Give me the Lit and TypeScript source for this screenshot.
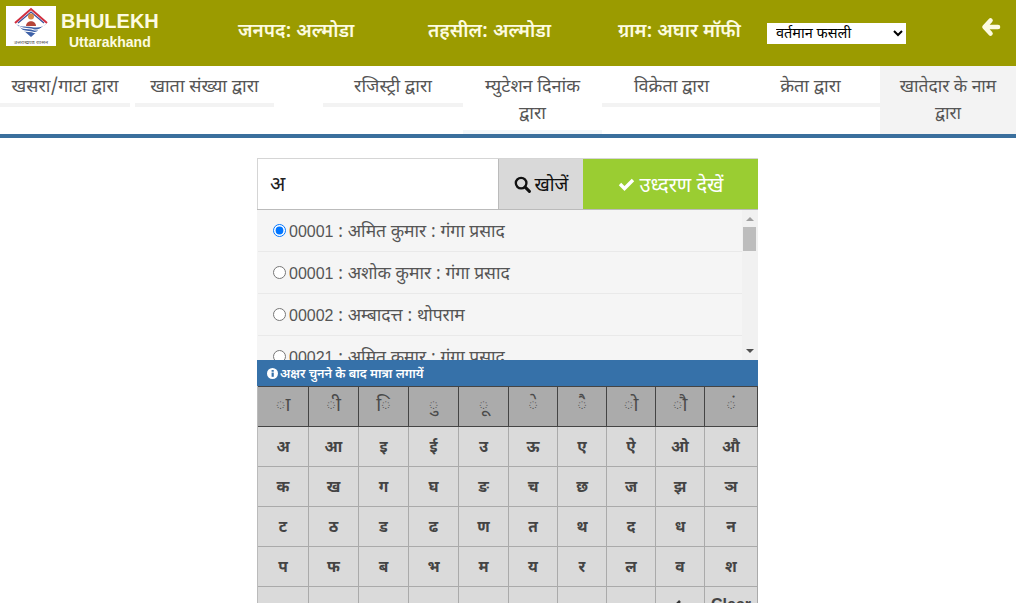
import { LitElement, html, css, svg } from "lit";
import { customElement } from "lit/decorators.js";

const TABS: [string, number][] = [
  ["खसरा/गाटा द्वारा", 130], ["", 5], ["खाता संख्या द्वारा", 139], ["", 49], ["रजिस्ट्री द्वारा", 140],
  ["म्युटेशन दिनांक द्वारा", 139], ["विक्रेता द्वारा", 139], ["क्रेता द्वारा", 139], ["खातेदार के नाम द्वारा", 136],
];
const ROWS = [["00001", " : अमित कुमार : गंगा प्रसाद"], ["00001", " : अशोक कुमार : गंगा प्रसाद"], ["00002", " : अम्बादत्त : थोपराम"], ["00021", " : अमित कुमार : गंगा प्रसाद"]];
const MATRA = ["ा", "ी", "ि", "ु", "ू", "े", "ै", "ो", "ौ", "ं"];
const KEYS = [
  ["अ", "आ", "इ", "ई", "उ", "ऊ", "ए", "ऐ", "ओ", "औ"],
  ["क", "ख", "ग", "घ", "ङ", "च", "छ", "ज", "झ", "ञ"],
  ["ट", "ठ", "ड", "ढ", "ण", "त", "थ", "द", "ध", "न"],
  ["प", "फ", "ब", "भ", "म", "य", "र", "ल", "व", "श"],
];

@customElement("app-root")
export class AppRoot extends LitElement {
  static styles = css`
    :host { display: block; height: 603px; overflow: hidden; background: #fff; color: #333;
      font-family: "Noto Sans Devanagari", "Lohit Devanagari", "Liberation Sans", "Noto Sans", sans-serif; }
    .hdr { height: 66px; background: #9b9b00; display: flex; color: #fdfbe0; box-sizing: border-box; padding-left: 6px; }
    .logo { width: 50px; height: 40px; margin-top: 6px; background: #fff; flex: none; }
    .logotxt { font-size: 5px; fill: #555; }
    .brand { width: 177px; margin-left: 5px; font-family: "Liberation Sans", sans-serif; font-weight: bold; padding-top: 10px; flex: none; }
    .b1 { font-size: 20px; line-height: 22px; }
    .b2 { font-size: 14px; line-height: 16px; padding: 2px 0 0 8px; }
    .info { width: 190px; flex: none; font-size: 18.9px; font-weight: 600; line-height: 22px; padding-top: 22px; box-sizing: border-box; white-space: nowrap; }
    .sel { width: 139px; height: 21px; margin: 23px 0 0 -41px; flex: none; background: #fff; border: 0; font-size: 14.5px; color: #000; padding: 1px 0 0 5px; font-family: inherit; }
    .back { margin: 17px 0 0 75px; flex: none; }
    .tabs { display: flex; height: 68px; border-bottom: 4px solid #3a6f9d; }
    .tab { flex: none; box-sizing: border-box; height: 41px; border-bottom: 4px solid #f3f3f3; text-align: center; font-size: 18px; line-height: 27px; padding-top: 8px; color: #555; white-space: nowrap; }
    .tab.two { height: 68px; white-space: normal; padding: 8px 20px 0; border-bottom-color: #f3f7fa; }
    .tab.on { height: 68px; white-space: normal; padding: 8px 15px 0; background: #f3f3f3; border: 0; font-size: 17.4px; }
    .tab.blank { border: 0; }
    .panel { width: 501px; margin: 20px 0 0 257px; }
    .search { display: flex; height: 52px; box-sizing: border-box; border-top: 1px solid #d5d5d5; border-bottom: 1px solid #bbb; }
    .inp { width: 242px; box-sizing: border-box; border-left: 1px solid #d5d5d5; border-right: 1px solid #bbb; padding: 3px 0 0 12px; font-size: 20px; line-height: 48px; color: #222; }
    .find { width: 84px; background: #d9d9d9; display: flex; align-items: center; justify-content: center; gap: 4px; font-size: 18.6px; color: #111; }
    .find span, .view span { padding-top: 5px; }
    .view { flex: 1; background: #9acd32; color: #fff; display: flex; align-items: center; justify-content: center; gap: 5px; font-size: 20px; }
    .listwrap { display: flex; height: 150px; overflow: hidden; background: #f5f5f5; padding-left: 1px; }
    .list { flex: 1; overflow: hidden; }
    .row { height: 41px; border-bottom: 1px solid #e9e9e9; display: flex; align-items: center; padding-left: 15px; font-size: 17.5px; color: #555; white-space: pre; }
    .row input { margin: 0 3px 0 0; width: 13px; height: 13px; }
    .row .t { padding-top: 4px; }
    .row .n { font-family: "Liberation Sans", sans-serif; font-size: 16px; }
    .sb { width: 16px; flex: none; display: flex; flex-direction: column; align-items: center; background: #f1f1f1; }
    .up, .dn { width: 0; height: 0; border-left: 4px solid transparent; border-right: 4px solid transparent; }
    .up { border-bottom: 4px solid #a0a0a0; margin: 7px 0 6px; }
    .dn { border-top: 4px solid #505050; margin-top: auto; margin-bottom: 7px; }
    .thumb { width: 13px; height: 24px; margin-right: 1px; background: #bdbdbd; }
    .note { height: 26px; background: #3671a9; color: #fff; display: flex; align-items: center; gap: 2px; padding-left: 10px; font-size: 12.6px; font-weight: 600; }
    .note span { padding-top: 3px; }
    .kb { border-left: 1px solid #bbb; }
    .krow { display: grid; grid-template-columns: 51px repeat(4, 50px) repeat(4, 49px) 1fr; height: 40px; }
    .k { background: #dadada; border: solid #aaa; border-width: 0 1px 1px 0; display: flex; align-items: center; justify-content: center; padding-top: 3px; font-size: 15.5px; font-weight: 700; color: #444; box-sizing: border-box; }
    .k.latin { font-family: "Liberation Sans", sans-serif; font-size: 16px; align-items: flex-start; padding-top: 9px; }
    .k.arrow { align-items: flex-start; padding-top: 12px; }
    .krow.m { height: 41px; }
    .m .k { background: #ababab; border-color: #444; border-width: 1px 1px 1px 0; color: #4a4a4a; font-weight: 400; font-size: 19px; padding-top: 0; }
  `;

  logo() {
    return svg`<svg class="logo" viewBox="0 0 50 40">
      <path d="M25 2 L42 17 L25 31 L8 17 Z" fill="#fff"/>
      <path d="M9 17 L25 3 L41 17" fill="none" stroke="#d22f3f" stroke-width="2"/>
      <path d="M12 17 L25 6 L38 17" fill="none" stroke="#3d4f9c" stroke-width="1.3"/>
      <circle cx="25" cy="10.5" r="3" fill="#d98a4a"/>
      <path d="M20 20 C20 13.5 30 13.5 30 20 Z" fill="#b5453a"/>
      <path d="M9 17 C14 22 19 20 25 21 C31 22 37 22 41 17 L25 31 Z" fill="#3f62a8"/>
      <path d="M13 20.5 C19 24 24 22 27 23.5 C31 25 35 23 38 20 M17 24.5 C21 26 25 25 28 26.5 C30 27 32 26 34 24" stroke="#fff" stroke-width="1.1" fill="none"/>
      <text class="logotxt" x="25" y="38" text-anchor="middle" textLength="34" lengthAdjust="spacingAndGlyphs">उत्तराखण्ड शासन</text>
    </svg>`;
  }

  render() {
    return html`
      <div class="hdr">
        ${this.logo()}
        <div class="brand"><div class="b1">BHULEKH</div><div class="b2">Uttarakhand</div></div>
        <div class="info">जनपद: अल्मोडा</div>
        <div class="info">तहसील: अल्मोडा</div>
        <div class="info">ग्राम: अघार मॉफी</div>
        <select class="sel"><option>वर्तमान फसली</option></select>
        <svg class="back" width="20" height="20" viewBox="0 0 20 20"><path d="M9.5 3.5 L3.5 10 L9.5 16.5 M5 10 H17" fill="none" stroke="#fdfbe0" stroke-width="4.6" stroke-linecap="round" stroke-linejoin="round"/></svg>
      </div>
      <div class="tabs">
        ${TABS.map(([t, w], i) => html`<div class="tab ${t ? "" : "blank"} ${i === 5 ? "two" : ""} ${i === 8 ? "on" : ""}" style="width:${w}px">${t}</div>`)}
      </div>
      <div class="panel">
        <div class="search">
          <div class="inp">अ</div>
          <div class="find">
            <svg width="17" height="17" viewBox="0 0 16 16"><circle cx="6.7" cy="6.7" r="5" fill="none" stroke="#111" stroke-width="2.2"/><path d="M10.5 10.5 L14.5 14.5" stroke="#111" stroke-width="2.8" stroke-linecap="round"/></svg>
            <span>खोजें</span>
          </div>
          <div class="view">
            <svg width="17" height="14" viewBox="0 0 17 14"><path d="M2 7 L6.5 11.5 L15 3" fill="none" stroke="#fff" stroke-width="3.4"/></svg>
            <span>उध्दरण देखें</span>
          </div>
        </div>
        <div class="listwrap">
          <div class="list">
            ${ROWS.map(([n, r], i) => html`<div class="row"><input type="radio" name="r" ?checked=${i === 0} /><span class="t"><span class="n">${n}</span>${r}</span></div>`)}
          </div>
          <div class="sb"><div class="up"></div><div class="thumb"></div><div class="dn"></div></div>
        </div>
        <div class="note">
          <svg width="11" height="11" viewBox="0 0 12 12"><circle cx="6" cy="6" r="6" fill="#fff"/><rect x="5" y="5" width="2.4" height="4.6" fill="#3671a9"/><rect x="5" y="2.2" width="2.4" height="1.9" fill="#3671a9"/></svg>
          <span>अक्षर चुनने के बाद मात्रा लगायें</span>
        </div>
        <div class="kb">
          <div class="krow m">${MATRA.map((k) => html`<div class="k">${k}</div>`)}</div>
          ${KEYS.map((r) => html`<div class="krow">${r.map((k) => html`<div class="k">${k}</div>`)}</div>`)}
          <div class="krow">
            ${Array.from({ length: 8 }, () => html`<div class="k"></div>`)}
            <div class="k arrow"><svg width="14" height="14" viewBox="0 0 14 14"><path d="M7 2 L2 7 L7 12 M3 7 H13" fill="none" stroke="#333" stroke-width="2.6"/></svg></div>
            <div class="k latin">Clear</div>
          </div>
        </div>
      </div>
    `;
  }
}
